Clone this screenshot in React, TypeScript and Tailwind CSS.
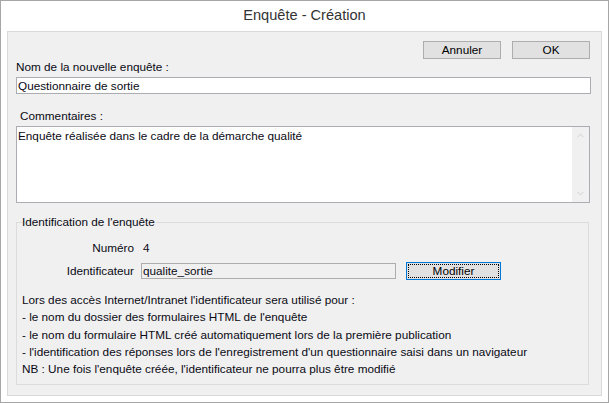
import { ChevronDown, ChevronUp } from "lucide-react";

const font = { fontFamily: '"Segoe UI", "Liberation Sans", Arial, sans-serif' };

function Button({ label, focused = false, className = "" }: { label: string; focused?: boolean; className?: string }) {
  return (
    <div
      className={`flex items-center justify-center h-[18px] bg-[#e1e1e1] text-[#000] ${
        focused ? "border border-[#0078d7] p-[1px]" : "border border-[#adadad]"
      } ${className}`}
    >
      {focused ? (
        <div className="flex h-full w-full items-center justify-center border border-dotted border-black leading-none">
          {label}
        </div>
      ) : (
        <span className="leading-none">{label}</span>
      )}
    </div>
  );
}

export default function App() {
  const notes = [
    "Lors des accès Internet/Intranet l'identificateur sera utilisé pour :",
    "- le nom du dossier des formulaires HTML de l'enquête",
    "- le nom du formulaire HTML créé automatiquement lors de la première publication",
    "- l'identification des réponses lors de l'enregistrement d'un questionnaire saisi dans un navigateur",
    "NB : Une fois l'enquête créée, l'identificateur ne pourra plus être modifié",
  ];

  return (
    <div className="w-[609px] h-[403px] bg-white border border-[#a6a6a6] flex flex-col text-[11.75px] text-[#0a0a14]" style={font}>
      {/* title bar */}
      <div className="h-[30px] flex items-center justify-center text-[14.6px] text-[#333]">Enquête - Création</div>

      {/* client area */}
      <div className="mx-[6px] h-[365px] border border-[#d9d9d9] bg-[#f0f0f0] pl-[8px] pr-[10px]">
        <div className="flex justify-end gap-[11px] mt-[9px] pr-[1px]">
          <Button label="Annuler" className="w-[78px]" />
          <Button label="OK" className="w-[78px]" />
        </div>

        <div className="h-[16px] leading-[16px]">Nom de la nouvelle enquête :</div>
        <div className="mt-[2px] h-[17px] border border-[#abadb3] bg-white pl-[1px] leading-[15px]">
          Questionnaire de sortie
        </div>

        <div className="mt-[14px] h-[16px] leading-[16px] pl-[4px]">Commentaires :</div>
        <div className="mt-[2px] mr-[1px] h-[77px] border border-[#abadb3] bg-white flex">
          <div className="flex-1 pl-[1px] pt-[1px] leading-[16px]">Enquête réalisée dans le cadre de la démarche qualité</div>
          <div className="w-[17px] bg-[#f0f0f0] flex flex-col items-center justify-between py-[3px]">
            <ChevronUp size={11} strokeWidth={1.6} className="text-[#c2c2c2]" />
            <ChevronDown size={11} strokeWidth={1.6} className="text-[#c2c2c2]" />
          </div>
        </div>

        {/* group box */}
        <div className="relative mt-[19px] mr-[2px] h-[163px] border border-[#dcdcdc]">
          <div className="absolute -top-[9px] left-[5px] bg-[#f0f0f0] pr-[1px] leading-[16px]">Identification de l'enquête</div>

          <div className="mt-[17px] flex items-center h-[16px]">
            <div className="w-[117px] text-right">Numéro</div>
            <div className="ml-[9px]">4</div>
          </div>
          <div className="mt-[6px] flex items-center h-[17px]">
            <div className="w-[117px] text-right">Identificateur</div>
            <div className="ml-[7px] w-[255px] h-[16px] border border-[#adadad] bg-[#f0f0f0] pl-[1px] leading-[14px]">
              qualite_sortie
            </div>
            <Button label="Modifier" focused className="ml-[10px] w-[95px] h-[17px]" />
          </div>

          <div className="mt-[12px] pl-[5px] leading-[17.25px]">
            {notes.map((n) => (
              <div key={n}>{n}</div>
            ))}
          </div>
        </div>
      </div>
    </div>
  );
}
